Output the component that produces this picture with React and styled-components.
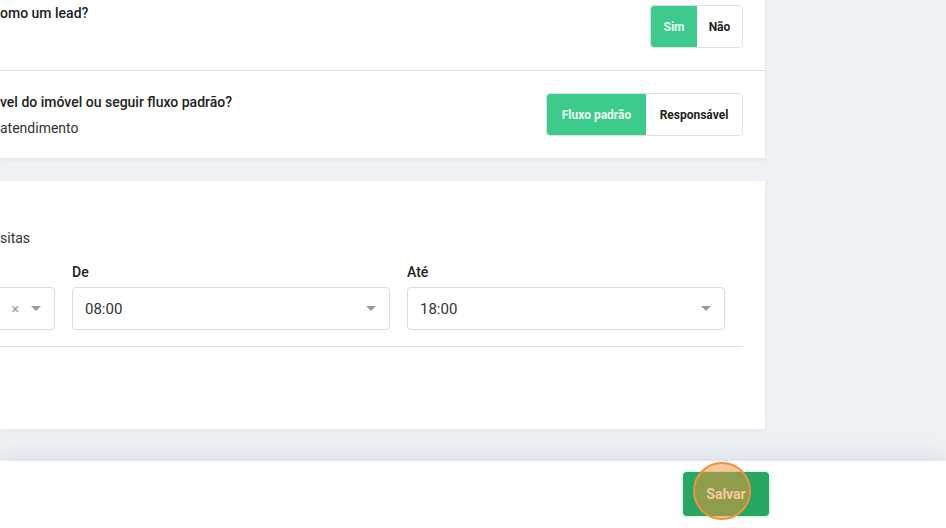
import React from 'react';
import styled, { createGlobalStyle } from 'styled-components';

const GlobalStyle = createGlobalStyle`
  body {
    margin: 0;
    background: #eef1f6;
    font-family: Roboto, "Liberation Sans", sans-serif;
    color: #222;
    overflow: hidden;
  }
`;

const Page = styled.div`
  height: 528px;
  display: flex;
  flex-direction: column;
  overflow: hidden;
`;

const Content = styled.div`
  flex: 1;
  display: flex;
  flex-direction: column;
  gap: 23px;
  width: 765px;
  margin-top: -17px;
`;

const Panel = styled.section`
  background: #fff;
  box-shadow: 0 2px 4px rgba(30, 40, 60, 0.05);
  padding-right: 22px;
  overflow: hidden;
`;

const SettingRow = styled.div`
  display: flex;
  justify-content: space-between;
  align-items: ${props => (props.center ? 'center' : 'flex-start')};
  padding: 22px 22px 22px 0;
  margin-right: -22px;
  border-bottom: ${props => (props.last ? 'none' : '1px solid #dcdfe3')};
`;

const RowText = styled.div`
  display: flex;
  flex-direction: column;
  gap: 6px;
  margin: -2px 0;
`;

const Title = styled.div`
  font-size: 14px;
  font-weight: 500;
  line-height: 20px;
  color: #222;
`;

const Subtitle = styled.div`
  font-size: 14px;
  line-height: 20px;
  color: #333;
`;

const Segmented = styled.div`
  display: flex;
  height: 43px;
  border: 1px solid #dcdfe3;
  border-radius: 4px;
  overflow: hidden;
  box-sizing: border-box;
`;

const Segment = styled.button`
  border: none;
  margin: 0;
  width: ${props => props.w}px;
  padding: 0;
  font-family: inherit;
  font-size: 12px;
  font-weight: 700;
  background: ${props => (props.active ? '#3ccb8b' : '#fff')};
  color: ${props => (props.active ? '#e9fbf2' : '#1f1f1f')};
`;

const HoursPanel = styled(Panel)`
  padding-top: 47px;
  padding-bottom: 82px;
`;

const FieldsRow = styled.div`
  display: flex;
  gap: 17px;
  padding-bottom: 16px;
  border-bottom: 1px solid #dcdfe3;
  margin-top: 15px;
`;

const Field = styled.div`
  width: 318px;
  flex-shrink: 0;
  margin-left: ${props => props.offset || 0}px;
  display: flex;
  flex-direction: column;
  gap: 6px;
`;

const Label = styled.div`
  font-size: 14px;
  font-weight: 500;
  line-height: 18px;
  height: 18px;
  color: #222;
`;

const SelectBox = styled.div`
  height: 43px;
  box-sizing: border-box;
  border: 1px solid #d9dce0;
  border-radius: 4px;
  display: flex;
  align-items: center;
  padding: 0 13px 0 12px;
  gap: 12px;
  font-size: 15px;
  color: #333;
`;

const Value = styled.span`
  flex: 1;
`;

const Clear = styled.span`
  font-size: 14px;
  color: #9a9a9a;
`;

const Caret = styled.span`
  width: 0;
  height: 0;
  border-left: 5px solid transparent;
  border-right: 5px solid transparent;
  border-top: 5px solid #9a9a9a;
`;

const Footer = styled.footer`
  height: 67px;
  flex-shrink: 0;
  background: #fff;
  box-shadow: 0 -6px 18px rgba(20, 30, 50, 0.08);
  display: flex;
  justify-content: flex-end;
  align-items: flex-start;
  padding: 11px 177px 0 0;
  box-sizing: border-box;
`;

const ButtonWrap = styled.div`
  position: relative;
`;

const SaveButton = styled.button`
  width: 86px;
  height: 44px;
  border: none;
  border-radius: 4px;
  background: #27a862;
  box-shadow: 0 0 3px rgba(60, 220, 130, 0.6);
  color: #fff;
  font-family: inherit;
  font-size: 14px;
  font-weight: 700;
`;

const ClickMark = styled.span`
  position: absolute;
  left: 10px;
  top: -10px;
  width: 58px;
  height: 58px;
  box-sizing: border-box;
  border-radius: 50%;
  border: 2px solid #f1923c;
  background: rgba(246, 146, 52, 0.5);
  pointer-events: none;
`;

function Select({ value, clearable }) {
  return (
    <SelectBox>
      <Value>{value}</Value>
      {clearable && <Clear>×</Clear>}
      <Caret />
    </SelectBox>
  );
}

export default function App() {
  return (
    <>
      <GlobalStyle />
      <Page>
        <Content>
          <Panel>
            <SettingRow>
              <RowText>
                <Title>omo um lead?</Title>
              </RowText>
              <Segmented>
                <Segment w={46} active>Sim</Segment>
                <Segment w={45}>Não</Segment>
              </Segmented>
            </SettingRow>
            <SettingRow center last>
              <RowText>
                <Title>vel do imóvel ou seguir fluxo padrão?</Title>
                <Subtitle>atendimento</Subtitle>
              </RowText>
              <Segmented>
                <Segment w={99} active>Fluxo padrão</Segment>
                <Segment w={96}>Responsável</Segment>
              </Segmented>
            </SettingRow>
          </Panel>
          <HoursPanel>
            <Subtitle>sitas</Subtitle>
            <FieldsRow>
              <Field offset={-263}>
                <Label />
                <Select value="" clearable />
              </Field>
              <Field>
                <Label>De</Label>
                <Select value="08:00" />
              </Field>
              <Field>
                <Label>Até</Label>
                <Select value="18:00" />
              </Field>
            </FieldsRow>
          </HoursPanel>
        </Content>
        <Footer>
          <ButtonWrap>
            <SaveButton>Salvar</SaveButton>
            <ClickMark />
          </ButtonWrap>
        </Footer>
      </Page>
    </>
  );
}
